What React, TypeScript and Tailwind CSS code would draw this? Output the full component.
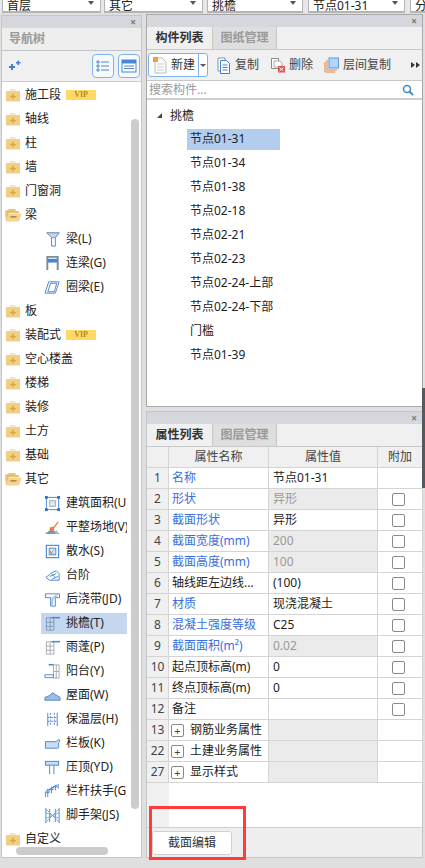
import React from "react";

const B = "#4a86d0";
const G = "#8a94a0";

function Folder({ open }: { open?: boolean }) {
  if (open)
    return (
      <svg width="18" height="14" viewBox="0 0 18 14" className="shrink-0">
        <path d="M1 3 L6 1 L11 1 L12 3 L15 3 L15 5 L5 5 L3 13 L2 13 Z" fill="#e8c274" />
        <path d="M4.5 5.5 L17.5 5.5 L15 13.5 L2 13.5 Z" fill="#f3d48f" />
        <rect x="6.5" y="8" width="6" height="1.6" fill="#a98b4a" />
      </svg>
    );
  return (
    <svg width="14" height="14" viewBox="0 0 14 14" className="shrink-0">
      <path d="M4 1 L9 1 L10 2.6 L4 2.6 Z" fill="#f3dca8" />
      <rect x="0" y="3" width="14" height="10.5" fill="#f0cf85" />
      <path d="M6.2 5.7h1.6v2.1h2.1v1.4H7.8v2.1H6.2V9.2H4.1V7.8h2.1z" fill="#dba64e" />
    </svg>
  );
}

function Ico({ n }: { n: string }) {
  const c = (
    {
      liang: (
        <>
          <path d="M3 2h13l-4 5v9H8V7z" fill="none" stroke={B} />
          <path d="M3 2h13l-4 5H8z" fill="#c5d5ea" stroke={G} />
        </>
      ),
      lianliang: (
        <>
          <path d="M3.5 16V2h11v14" fill="none" stroke="#7f8b97" strokeWidth="2" />
          <rect x="4" y="4" width="10" height="4" fill={B} />
        </>
      ),
      quanliang: <path d="M5 3h11l-4 12H1z M7 4.5h6.5L11 13.5H4z" fill="#fff" fillRule="evenodd" stroke={B} />,
      jianzhu: (
        <>
          <rect x="2.5" y="2.5" width="13" height="13" fill="#fff" stroke={B} />
          <rect x="6" y="6" width="6" height="6" fill="#e5e8ec" stroke="#a0a8b0" />
          <rect x="1" y="1" width="3" height="3" fill="#3d6fb0" />
          <rect x="14" y="1" width="3" height="3" fill="#3d6fb0" />
          <rect x="1" y="14" width="3" height="3" fill="#3d6fb0" />
          <rect x="14" y="14" width="3" height="3" fill="#3d6fb0" />
        </>
      ),
      pingzheng: (
        <>
          <path d="M1 16 L6 12 L10 12 L17 16 Z" fill="#6f9ad0" />
          <path d="M9 11 L15 3" stroke="#e8803a" strokeWidth="1.4" />
          <path d="M6 9 L10 8 L11 12 L6 13 Z" fill="#e8803a" />
          <path d="M13 12l3 4h-5z" fill="#b0b4ba" />
        </>
      ),
      sanshui: (
        <>
          <rect x="2.5" y="2.5" width="13" height="13" fill="#fff" stroke={B} strokeWidth="1.2" />
          <rect x="5.5" y="5.5" width="7" height="7" fill="#dfeaf7" stroke={B} />
          <path d="M11 7 L7.5 10.5 M7 8v3h3" stroke="#e8803a" fill="none" />
        </>
      ),
      taijie: (
        <>
          <path d="M2 11 L6 8 L8 6 L13 4 L16 7 L16 14 L6 14 Z" fill="#fff" stroke={B} />
          <path d="M6 10 L13 7 M8 13 L15 10 M8 7 L12 11" stroke={B} fill="none" />
        </>
      ),
      houjiao: (
        <>
          <path d="M1.5 3h15v4H12v9H7V7H1.5z" fill="#fff" stroke={B} />
          <path d="M8.5 15 L9 8 L14 4" stroke="#a8c4e6" strokeWidth="2" fill="none" />
        </>
      ),
      tiaoyan: (
        <>
          <path d="M2.5 3h8v13h-8z M2.5 7.5h8 M2.5 12h8 M6.5 3v13" fill="none" stroke="#7c99bb" />
          <rect x="8" y="2" width="9" height="1.6" fill={B} />
        </>
      ),
      yupeng: (
        <>
          <path d="M2.5 3h8v13h-8z M2.5 7.5h8 M2.5 12h8 M6.5 3v13" fill="none" stroke="#a5a9ae" />
          <rect x="8" y="2" width="9" height="1.6" fill={B} />
        </>
      ),
      yangtai: (
        <>
          <path d="M10 2h6v14h-6z M13 2v14 M10 9h6" fill="none" stroke="#a5a9ae" />
          <rect x="5" y="1" width="5" height="1.6" fill={B} />
          <path d="M1 12.5h9v3H1z" fill="#fff" stroke={B} />
        </>
      ),
      wumian: <path d="M1 14 V11 L6 9 L9 6 L12 8 L17 11 V14 Z" fill="#9cbce4" stroke={B} />,
      baowen: (
        <>
          <path d="M4 2v14 M14 2v14" stroke={B} />
          <path d="M7 2v14 M11 2v14" stroke={B} strokeDasharray="2 1.5" />
          <path d="M4 7h10 M4 11h10" stroke={B} strokeDasharray="2 1.5" />
        </>
      ),
      lanban: <path d="M1.5 7h11c1 0 2-2 3-2h1v2l-1 1v5c0 1-1 1-1 1H1.5z" fill="#c8dcf3" stroke={B} />,
      yading: (
        <>
          <rect x="1.5" y="2.5" width="14" height="4" fill="#c8dcf3" stroke={B} />
          <path d="M6 6.5V16 M10.5 6.5V16" stroke={B} />
        </>
      ),
      langan: (
        <>
          <path d="M1.5 15V10h4V7h4V4h5" fill="none" stroke={B} />
          <path d="M1.5 9 L14 2 M4 6v9 M8 4v7 M12 2v6 M15 1v5" stroke={B} fill="none" />
        </>
      ),
      jiaoshou: (
        <>
          <path d="M2 1v16 M16 1v16 M6 2v14 M12 2v14" stroke={B} fill="none" />
          <path d="M2 2 L16 16 M16 2 L2 16 M2 6 L16 12 M16 6 L2 12" stroke="#7ba6dc" fill="none" />
        </>
      ),
    } as Record<string, React.ReactNode>
  )[n];
  return (
    <svg width="17" height="17" viewBox="0 0 18 18" className="shrink-0">
      {c}
    </svg>
  );
}

type Node = { t: string; vip?: boolean; open?: boolean; ic?: string; sel?: boolean };
const tree: Node[] = [
  { t: "施工段", vip: true },
  { t: "轴线" },
  { t: "柱" },
  { t: "墙" },
  { t: "门窗洞" },
  { t: "梁", open: true },
  { t: "梁(L)", ic: "liang" },
  { t: "连梁(G)", ic: "lianliang" },
  { t: "圈梁(E)", ic: "quanliang" },
  { t: "板" },
  { t: "装配式", vip: true },
  { t: "空心楼盖" },
  { t: "楼梯" },
  { t: "装修" },
  { t: "土方" },
  { t: "基础" },
  { t: "其它", open: true },
  { t: "建筑面积(U)", ic: "jianzhu" },
  { t: "平整场地(V)", ic: "pingzheng" },
  { t: "散水(S)", ic: "sanshui" },
  { t: "台阶", ic: "taijie" },
  { t: "后浇带(JD)", ic: "houjiao" },
  { t: "挑檐(T)", ic: "tiaoyan", sel: true },
  { t: "雨蓬(P)", ic: "yupeng" },
  { t: "阳台(Y)", ic: "yangtai" },
  { t: "屋面(W)", ic: "wumian" },
  { t: "保温层(H)", ic: "baowen" },
  { t: "栏板(K)", ic: "lanban" },
  { t: "压顶(YD)", ic: "yading" },
  { t: "栏杆扶手(G)", ic: "langan" },
  { t: "脚手架(JS)", ic: "jiaoshou" },
  { t: "自定义" },
];

const list = ["节点01-34", "节点01-38", "节点02-18", "节点02-21", "节点02-23", "节点02-24-上部", "节点02-24-下部", "门槛", "节点01-39"];

type Row = { n: number; name: string; blue?: boolean; val?: string; gray?: boolean; chk?: boolean };
const rows: Row[] = [
  { n: 1, name: "名称", blue: true, val: "节点01-31" },
  { n: 2, name: "形状", blue: true, val: "异形", gray: true, chk: true },
  { n: 3, name: "截面形状", blue: true, val: "异形", chk: true },
  { n: 4, name: "截面宽度(mm)", blue: true, val: "200", gray: true, chk: true },
  { n: 5, name: "截面高度(mm)", blue: true, val: "100", gray: true, chk: true },
  { n: 6, name: "轴线距左边线...", val: "(100)", chk: true },
  { n: 7, name: "材质", blue: true, val: "现浇混凝土", chk: true },
  { n: 8, name: "混凝土强度等级", blue: true, val: "C25", chk: true },
  { n: 9, name: "截面面积(m²)", blue: true, val: "0.02", gray: true, chk: true },
  { n: 10, name: "起点顶标高(m)", val: "0", chk: true },
  { n: 11, name: "终点顶标高(m)", val: "0", chk: true },
  { n: 12, name: "备注", val: "", chk: true },
];
const groups: [number, string][] = [
  [13, "钢筋业务属性"],
  [22, "土建业务属性"],
  [27, "显示样式"],
];

function Sel({ t, cls, arrow = true }: { t: string; cls: string; arrow?: boolean }) {
  return (
    <div className={`h-[13px] ${cls} shrink-0 bg-white border-b-2 border-x border-[#b4b4b4] overflow-hidden relative flex items-end pl-[4px]`}>
      <span className="leading-[14px] -mb-[2px] whitespace-nowrap">{t}</span>
      {arrow && <span className="absolute right-[6px] top-[1px] w-0 h-0 border-x-[3px] border-t-[4px] border-x-transparent border-t-[#555]" />}
    </div>
  );
}

function PanelHead() {
  return (
    <div className="h-[12px] bg-[#d5d7dc] flex items-center justify-end pr-[5px] shrink-0">
      <span className="text-[#777] text-[10px] leading-none font-bold">×</span>
    </div>
  );
}

function Tabs({ a, b }: { a: string; b: string }) {
  return (
    <div className="h-[23px] flex bg-[#f0f0f0] border-b border-[#c8c8c8] shrink-0">
      <div className="w-[65px] flex items-center justify-center font-bold text-[#333]">{a}</div>
      <div className="w-[65px] flex items-center justify-center font-bold text-[#999] bg-[#dedede] border-x border-[#c8c8c8]">{b}</div>
    </div>
  );
}

function Check() {
  return <span className="w-[13px] h-[13px] border border-[#8a8a8a] rounded-[2px] bg-white block" />;
}

const cell = "border-r border-b border-[#d4d4d4] flex items-center overflow-hidden whitespace-nowrap";
const cols = "grid grid-cols-[22px_100px_109px_45px] auto-rows-[21px]";

export default function App() {
  return (
    <div
      className="w-[425px] h-[868px] bg-[#dfdfdf] overflow-hidden relative text-[12px] text-[#222] flex flex-col"
      style={{ fontFamily: '"Noto Sans","Noto Sans CJK SC",sans-serif' }}
    >
      <div className="h-[13px] flex pl-[2px] shrink-0 bg-[#e8e8e8]">
        <Sel t="首层" cls="w-[99px]" />
        <Sel t="其它" cls="w-[99px] ml-[3px]" />
        <Sel t="挑檐" cls="w-[96px] ml-[4px]" />
        <Sel t="节点01-31" cls="w-[97px] ml-[5px]" />
        <Sel t="分" cls="w-[30px] ml-[5px]" arrow={false} />
      </div>

      <div className="flex flex-1 min-h-0 pt-[1px] pl-[1px]">
        {/* left */}
        <div className="w-[141px] h-[843px] mt-[1px] border border-[#c4c6ca] bg-white flex flex-col relative overflow-hidden shrink-0">
          <PanelHead />
          <div className="h-[23px] bg-[#eeeeee] border-b border-[#c0c4cc] flex items-center pl-[7px] font-bold text-[#999] shrink-0">导航树</div>
          <div className="h-[31px] bg-[#f0f0f0] border-b border-[#cfcfcf] flex items-center pl-[5px] pr-[1px] shrink-0">
            <svg width="14" height="14" viewBox="0 0 14 14">
              <path d="M2 7h2V5h2v2h2v2H6v2H4V9H2z M9 3h1.5V1.5H12V3h1.5v1.5H12V6h-1.5V4.5H9z" fill="#3f7fd0" />
            </svg>
            <div className="ml-auto w-[22px] h-[24px] border border-[#7db2ee] rounded-[4px] bg-[#f7fafd] flex items-center justify-center">
              <svg width="14" height="14" viewBox="0 0 14 14">
                <path d="M1 2h2v2H1z M1 6h2v2H1z M1 10h2v2H1z" fill="none" stroke="#4a86d0" />
                <path d="M5 3h8 M5 7h8 M5 11h8" stroke="#4a86d0" />
              </svg>
            </div>
            <div className="ml-[4px] w-[22px] h-[24px] border border-[#7db2ee] rounded-[4px] bg-[#f7fafd] flex items-center justify-center">
              <svg width="16" height="14" viewBox="0 0 16 14">
                <rect x="1" y="1" width="14" height="12" fill="#fff" stroke="#4a86d0" />
                <rect x="1" y="1" width="14" height="3.5" fill="#4a86d0" />
                <path d="M3 7h10 M3 9.5h10" stroke="#4a86d0" />
              </svg>
            </div>
          </div>
          <div className="flex-1 min-h-0 overflow-hidden relative pt-[1px]">
            {tree.map((r) =>
              r.ic ? (
                <div key={r.t} className="h-[24px] w-[126px] flex items-center overflow-hidden">
                  <div className={`ml-[39px] w-[86px] h-[21px] flex items-center pl-[3px] gap-[5px] shrink-0 overflow-hidden whitespace-nowrap ${r.sel ? "bg-[#c5d7ee]" : ""}`}>
                    <Ico n={r.ic} />
                    <span>{r.t}</span>
                  </div>
                </div>
              ) : (
                <div key={r.t} className="h-[24px] flex items-center pl-[2px]">
                  <span className="w-[17px] flex justify-center shrink-0">
                    <Folder open={r.open} />
                  </span>
                  <span className="ml-[4px]">{r.t}</span>
                  {r.vip && (
                    <span
                      className="ml-[5px] w-[30px] h-[10px] bg-[#ffd966] text-[#b58a1f] text-[8px] font-bold leading-[10px] text-center"
                      style={{ fontFamily: '"Liberation Serif",serif' }}
                    >
                      VIP
                    </span>
                  )}
                </div>
              )
            )}
            <div className="absolute left-[129px] top-[37px] w-[8px] h-[690px] rounded-full bg-[#cccccc]" />
            <div className="absolute left-[14px] bottom-[2px] w-[92px] h-[8px] rounded-full bg-[#cccccc]" />
          </div>
        </div>

        {/* right */}
        <div className="ml-[4px] w-[277px] flex flex-col shrink-0">
          <div className="h-[393px] border border-[#a8a8a8] bg-white flex flex-col shrink-0">
            <PanelHead />
            <Tabs a="构件列表" b="图纸管理" />
            <div className="h-[31px] bg-[#f0f0f0] border-b border-[#c8c8c8] flex items-center pl-[1px] shrink-0">
              <div className="h-[24px] w-[60px] border border-[#7db2ee] rounded-[3px] bg-white flex items-center">
                <svg width="16" height="18" viewBox="0 0 16 18" className="ml-[3px]">
                  <path d="M3 2h7l4 4v11H3z" fill="#fff" stroke="#b8b8b8" />
                  <path d="M5 8h7 M5 11h7 M5 14h7" stroke="#c8c8c8" />
                  <rect x="1" y="1" width="5" height="5" fill="#f2a13a" />
                </svg>
                <span className="ml-[3px] text-[#333]">新建</span>
                <span className="ml-[3px] h-full border-l border-[#7db2ee] flex-1 flex items-center justify-center">
                  <span className="w-0 h-0 border-x-[3px] border-t-[3px] border-x-transparent border-t-[#555]" />
                </span>
              </div>
              <svg width="14" height="17" viewBox="0 0 14 17" className="ml-[9px]">
                <path d="M1 1h7v13H1z" fill="#fff" stroke="#8a94a0" />
                <path d="M3.5 3.5h6l3 3v10h-9z" fill="#fff" stroke="#3f7fd0" />
                <path d="M5.5 8h5 M5.5 10.5h5 M5.5 13h5" stroke="#3f7fd0" />
              </svg>
              <span className="ml-[4px] text-[#444]">复制</span>
              <svg width="16" height="16" viewBox="0 0 16 16" className="ml-[11px]">
                <path d="M1.5 1.5h7v10h-7z" fill="#fff" stroke="#8a8a8a" />
                <path d="M4 4h6l2 2v4H4z" fill="#fff" stroke="#aaaaaa" />
                <rect x="8" y="9" width="7" height="6.5" fill="#d9534f" />
                <path d="M9.5 10.5l4 3.5 M13.5 10.5l-4 3.5" stroke="#fff" />
              </svg>
              <span className="ml-[3px] text-[#444]">删除</span>
              <svg width="15" height="16" viewBox="0 0 15 16" className="ml-[11px]">
                <path d="M1 5v10h10" fill="none" stroke="#e8803a" />
                <path d="M3 3v10h10" fill="none" stroke="#e8803a" />
                <rect x="5" y="1" width="9.5" height="10" fill="#b5d3f5" stroke="#5a9ae0" />
              </svg>
              <span className="ml-[4px] text-[#444]">层间复制</span>
              <span className="ml-[20px] flex">
                <span className="w-0 h-0 border-y-[3px] border-l-[4px] border-y-transparent border-l-[#333]" />
                <span className="ml-[1px] w-0 h-0 border-y-[3px] border-l-[4px] border-y-transparent border-l-[#333]" />
              </span>
            </div>
            <div className="h-[19px] bg-white border-b-2 border-[#cfcfcf] flex items-center pl-[2px] pr-[8px] text-[#999] shrink-0">
              <span>搜索构件...</span>
              <svg width="12" height="12" viewBox="0 0 12 12" className="ml-auto">
                <circle cx="5" cy="5" r="3.5" fill="none" stroke="#3f8fd0" strokeWidth="1.6" />
                <path d="M7.5 7.5l3.5 3.5" stroke="#3f8fd0" strokeWidth="2" />
              </svg>
            </div>
            <div className="flex-1 min-h-0 pt-[4px]">
              <div className="h-[23px] flex items-center pl-[10px] text-[#222]">
                <span className="w-0 h-0 border-l-[5px] border-l-transparent border-b-[5px] border-b-[#444]" />
                <span className="ml-[8px]">挑檐</span>
              </div>
              <div className="h-[24px] flex items-center">
                <span className="ml-[40px] w-[93px] h-[21px] bg-[#b3cdee] flex items-center pl-[3px]">节点01-31</span>
              </div>
              {list.map((t) => (
                <div key={t} className="h-[24px] flex items-center pl-[43px]">
                  {t}
                </div>
              ))}
            </div>
          </div>

          <div className="mt-[4px] h-[447px] shrink-0 border border-[#c4c6ca] bg-[#eeeeee] flex flex-col">
            <PanelHead />
            <Tabs a="属性列表" b="图层管理" />
            <div className={`${cols} shrink-0 bg-white`}>
              <div className={`${cell} bg-[#f0f0f0]`} />
              <div className={`${cell} bg-[#f0f0f0] justify-center text-[#444]`}>属性名称</div>
              <div className={`${cell} bg-[#f0f0f0] justify-center text-[#444]`}>属性值</div>
              <div className={`${cell} bg-[#f0f0f0] justify-center text-[#444]`}>附加</div>
              {rows.map((r) => (
                <React.Fragment key={r.n}>
                  <div className={`${cell} bg-[#f0f0f0] justify-center text-[#444]`}>{r.n}</div>
                  <div className={`${cell} pl-[3px] ${r.blue ? "text-[#3a6ee0]" : "text-[#222]"}`}>{r.name}</div>
                  <div className={`${cell} pl-[4px] ${r.gray ? "bg-[#ebebeb] text-[#999]" : "text-[#222]"}`}>{r.val}</div>
                  <div className={`${cell} justify-center pr-[3px]`}>{r.chk && <Check />}</div>
                </React.Fragment>
              ))}
              {groups.map(([n, t]) => (
                <React.Fragment key={n}>
                  <div className={`${cell} bg-[#f0f0f0] justify-center text-[#444]`}>{n}</div>
                  <div className={`${cell} pl-[2px]`}>
                    <span className="w-[13px] h-[13px] border border-[#8a8a8a] rounded-[2px] flex items-center justify-center text-[#444] text-[11px] leading-none">+</span>
                    <span className="ml-[6px]">{t}</span>
                  </div>
                  <div className={`${cell} bg-[#ebebeb]`} />
                  <div className={cell} />
                </React.Fragment>
              ))}
            </div>
            <div className="flex-1 min-h-0 bg-white border-b border-[#cfcfcf] flex">
              <div className="w-[22px] bg-[#f0f0f0]" />
            </div>
            <div className="h-[29px] bg-[#eeeeee] pl-[5px] pt-[3px] shrink-0">
              <div className="w-[80px] h-[24px] bg-white border border-[#d0d0d0] rounded-[3px] flex items-center justify-center text-[#333]">截面编辑</div>
            </div>
          </div>
        </div>
      </div>
      <div className="absolute left-[422px] top-[388px] w-[3px] h-[100px] bg-[#555a60]" />
      <div className="absolute left-[149px] top-[806px] w-[97px] h-[54px] border-[3px] border-[#ff3b3b]" />
    </div>
  );
}
